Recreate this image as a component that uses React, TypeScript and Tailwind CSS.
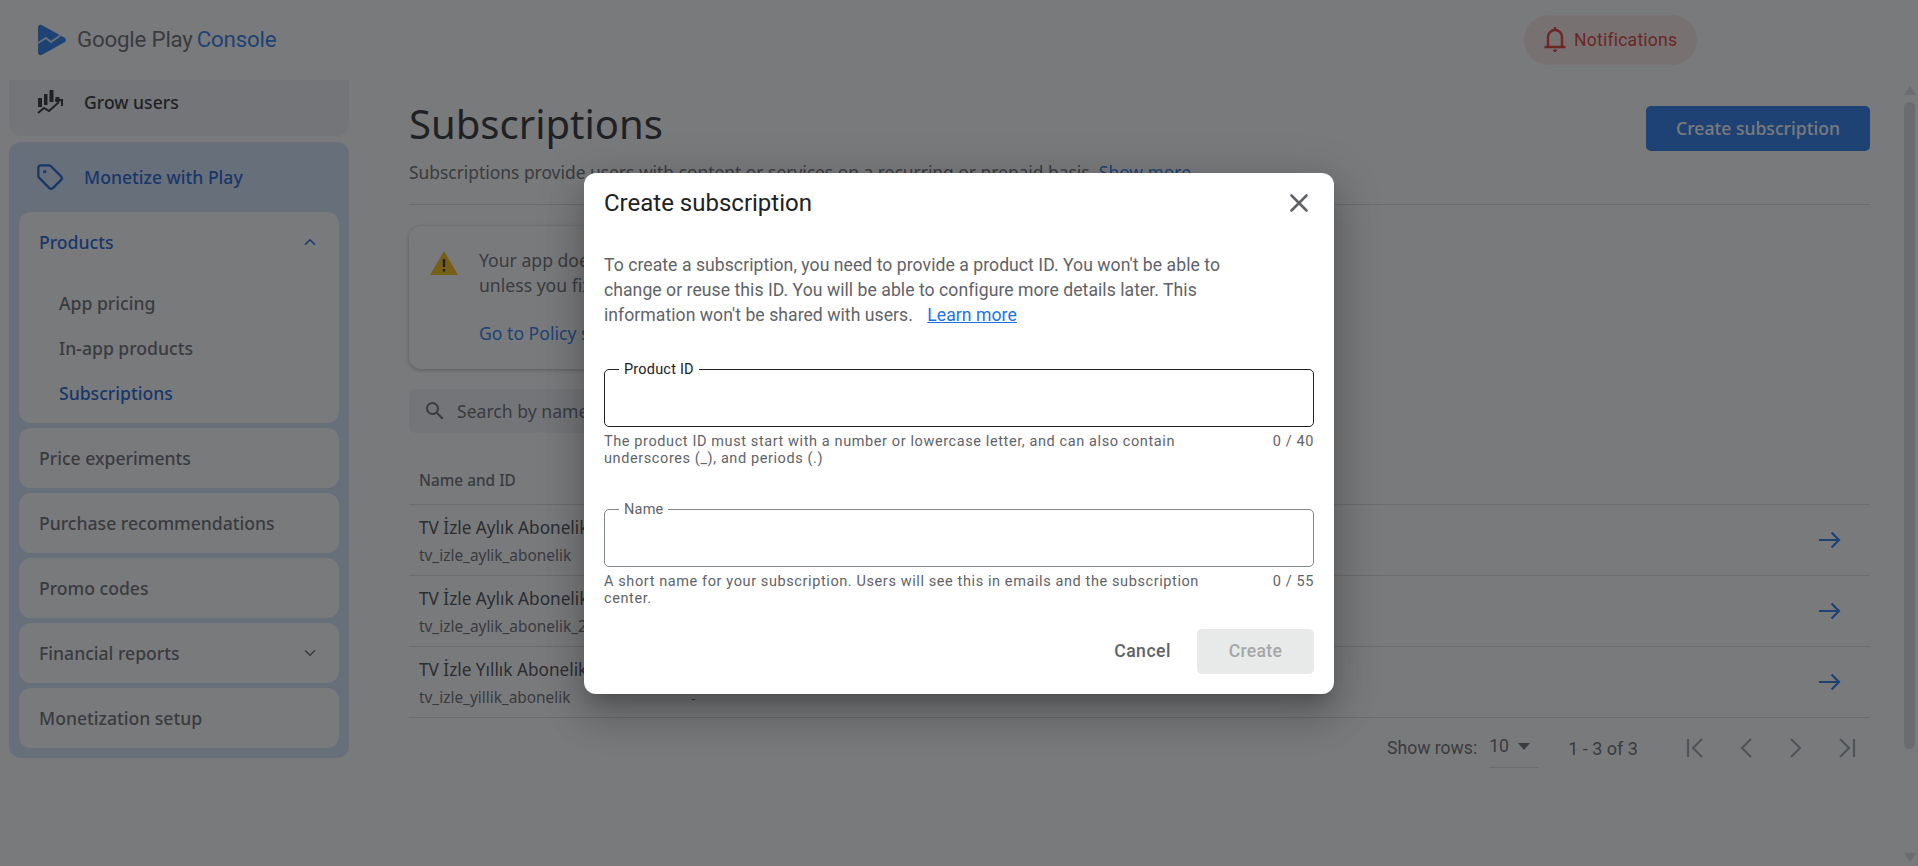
import React from 'react';
import { ChevronDown, ChevronUp, Tag, X } from 'lucide-react';

const navItems = ['Price experiments', 'Purchase recommendations', 'Promo codes', 'Financial reports', 'Monetization setup'];

const rows = [
  { name: 'TV İzle Aylık Abonelik', id: 'tv_izle_aylik_abonelik', extra: '' },
  { name: 'TV İzle Aylık Abonelik 2', id: 'tv_izle_aylik_abonelik_2', extra: '' },
  { name: 'TV İzle Yıllık Abonelik', id: 'tv_izle_yillik_abonelik', extra: '-' },
];

const Logo = () => (
  <svg width="30" height="32" viewBox="0 0 30 32" className="shrink-0">
    <path d="M1 3.5C1 1.2 3.2.2 5 1.3l22.6 12.4c1.8 1 1.8 3.600 0 4.600L5 30.700C3.200 31.800 1 30.800 1 28.500z" fill="#1a73e8" />
    <path d="M1 19l8-5 5 4 10-7" fill="none" stroke="#d2e3fc" strokeWidth="2" />
  </svg>
);

const GrowIcon = () => (
  <svg width="26" height="26" viewBox="0 0 26 26" className="shrink-0" fill="#202124">
    <rect x="1" y="9" width="4" height="9" />
    <rect x="7" y="5" width="3.500" height="11" />
    <rect x="12.500" y="1" width="4" height="12" />
    <rect x="18.500" y="8" width="4" height="5" />
    <path d="M1 24l6-5 5 3 10-9" fill="none" stroke="#202124" strokeWidth="2" />
    <path d="M18 11h7v6" fill="none" stroke="#202124" strokeWidth="2" />
  </svg>
);

const PageIcon = ({ d }: { d: string }) => (
  <svg width="24" height="24" viewBox="0 0 24 24" fill="none" stroke="#9aa0a6" strokeWidth="2.200">
    <path d={d} />
  </svg>
);

const Field = ({ label, dark, help, count }: { label: string; dark?: boolean; help: string; count: string }) => (
  <div>
    <div className={`relative h-[58px] rounded-[5px] border ${dark ? 'border-[#202124]' : 'border-[#80868b]'}`}>
      <span className={`absolute left-[14px] top-[-8px] bg-white px-[5px] text-[14.500px] leading-[16px] tracking-[0.2px] ${dark ? 'text-[#202124]' : 'text-[#5f6368]'}`}>
        {label}
      </span>
    </div>
    <div className="mt-[6px] flex justify-between text-[14.500px] leading-[17.500px] tracking-[0.6px] text-[#5f6368]">
      <p className="w-[610px]">{help}</p>
      <span>{count}</span>
    </div>
  </div>
);

const Dialog = () => (
  <div className="absolute inset-0 flex items-center justify-center bg-[#202124]/60">
    <div className="h-[521px] w-[750px] rounded-[12px] bg-white px-[20px] pt-[18px] font-['Roboto',sans-serif] shadow-[0_11px_15px_-7px_rgba(0,0,0,0.2),0_24px_38px_3px_rgba(0,0,0,0.14),0_9px_46px_8px_rgba(0,0,0,0.12)]">
      <div className="flex h-[24px] items-center justify-between">
        <h2 className="text-[24px] leading-[24px] text-[#202124]">Create subscription</h2>
        <X size={30} strokeWidth={2.100} className="text-[#5f6368]" />
      </div>
      <p className="mt-[38px] w-[665px] text-[17.600px] leading-[25px] tracking-[0.05px] text-[#5f6368]">
        To create a subscription, you need to provide a product ID. You won't be able to change or reuse this ID. You will be able to configure more details later. This information won't be shared with users.{' '}
        <span className="ml-[10px] text-[#1a73e8] underline">Learn more</span>
      </p>
      <div className="mt-[41px]">
        <Field dark label="Product ID" count="0 / 40" help="The product ID must start with a number or lowercase letter, and can also contain underscores (_), and periods (.)" />
      </div>
      <div className="mt-[41px]">
        <Field label="Name" count="0 / 55" help="A short name for your subscription. Users will see this in emails and the subscription center." />
      </div>
      <div className="mt-[21px] flex items-center justify-end gap-[26px]">
        <button className="text-[17.600px] font-medium tracking-[0.5px] text-[#5f6368]">Cancel</button>
        <button className="h-[45px] w-[117px] rounded-[5px] bg-[#e8e9e9] text-[17.600px] font-medium tracking-[0.3px] text-[#a5a7a8]">Create</button>
      </div>
    </div>
  </div>
);

export default function App() {
  return (
    <div className="relative flex h-[866px] flex-col overflow-hidden bg-white font-['Noto_Sans',sans-serif] text-[#202124]">
      <header className="flex h-[80px] shrink-0 items-center pl-[37px]">
        <Logo />
        <div className="ml-[10px] flex w-[200px] gap-[4px] whitespace-nowrap font-['Roboto',sans-serif] text-[22.300px] tracking-[-0.2px]">
          <span className="text-[#5f6368]">Google Play</span>
          <span className="text-[#1a73e8]">Console</span>
        </div>
        <div className="ml-[1247px] flex h-[50px] w-[173px] items-center rounded-full bg-[#fce8e6] pl-[19px] font-['Roboto',sans-serif] text-[17.600px] tracking-[0.2px] text-[#d93025]">
          <svg width="24" height="28" viewBox="0 0 24 28" fill="none" stroke="#d93025" strokeWidth="2.400">
            <path d="M5 21V11a7 7 0 0 1 14 0v10M1.500 21h21" />
            <path d="M12 1v3" />
            <path d="M10 24h4l-2 2z" fill="#d93025" strokeWidth="1" />
          </svg>
          <span className="ml-[7px]">Notifications</span>
        </div>
      </header>

      <div className="flex min-h-0 flex-1">
        <aside className="w-[368px] shrink-0 pl-[9px] pr-[19px]">
          <div className="flex h-[56px] items-center gap-[21px] rounded-b-[12px] bg-[#f1f3f4] pb-[12px] pl-[28px] text-[17.600px] font-medium">
            <GrowIcon />
            <span>Grow users</span>
          </div>
          <div className="mt-[6px] rounded-[12px] bg-[#d3e3fd] px-[10px] pb-[10px]">
            <div className="flex h-[70px] items-center gap-[20px] pl-[17px] text-[17.600px] font-medium text-[#0b57d0]">
              <Tag size={28} strokeWidth={2} />
              <span>Monetize with Play</span>
            </div>
            <div className="flex flex-col gap-[5px]">
              <div className="h-[211px] rounded-[12px] bg-white pl-[20px] pr-[20px] pt-[18px] text-[17.600px] font-medium">
                <div className="flex h-[24px] items-center justify-between text-[#0b57d0]">
                  <span>Products</span>
                  <ChevronUp size={18} strokeWidth={2} />
                </div>
                <div className="mt-[37px] flex flex-col gap-[21px] pl-[20px] leading-[24px] text-[#5f6368]">
                  <span>App pricing</span>
                  <span>In-app products</span>
                  <span className="text-[#0b57d0]">Subscriptions</span>
                </div>
              </div>
              {navItems.map(item => (
                <div key={item} className="flex h-[60px] items-center justify-between rounded-[12px] bg-white px-[20px] text-[17.600px] font-medium text-[#5f6368]">
                  <span>{item}</span>
                  {item === 'Financial reports' && <ChevronDown size={18} strokeWidth={2} />}
                </div>
              ))}
            </div>
          </div>
        </aside>

        <main className="min-w-0 flex-1 pl-[41px] pr-[31px]">
          <div className="flex h-[125px] items-start justify-between border-b border-[#dadce0] pt-[19px]">
            <div>
              <h1 className="text-[40px] leading-[50px]">Subscriptions</h1>
              <p className="mt-[11px] whitespace-nowrap text-[17.400px] leading-[24px] text-[#5f6368]">
                Subscriptions provide users with content or services on a recurring or prepaid basis.{' '}
                <span className="text-[#1a73e8]">Show more</span>
              </p>
            </div>
            <button className="mt-[7px] h-[45px] w-[224px] rounded-[5px] bg-[#1a73e8] text-[17.600px] font-medium text-white">Create subscription</button>
          </div>
          <div className="mr-[660px] mt-[21px] flex h-[143px] gap-[20px] rounded-[12px] bg-white pl-[20px] pt-[22px] text-[17.600px] leading-[25px] text-[#5f6368] shadow-[0_1px_4px_rgba(60,64,67,0.4)]">
            <svg width="30" height="26" viewBox="0 0 30 26" className="mt-[2px] shrink-0">
              <path d="M15 1l14 24H1z" fill="#fbbc04" />
              <path d="M13.800 9h2.400v8h-2.400zM13.800 19h2.400v2.400h-2.400z" fill="#202124" />
            </svg>
            <div className="whitespace-nowrap">
              <p>Your app doesn't comply with our policies and can't</p>
              <p>unless you fix the issues listed on the Policy status page</p>
              <p className="mt-[23px] text-[#1a73e8]">Go to Policy status</p>
            </div>
          </div>
          <div className="mr-[660px] mt-[20px] flex h-[44px] items-center gap-[10px] rounded-[6px] bg-[#f1f3f4] pl-[14px] text-[17.600px] text-[#5f6368]">
            <svg width="24" height="24" viewBox="0 0 24 24" fill="#5f6368">
              <path d="M15.500 14h-.79l-.28-.27A6.471 6.471 0 0 0 16 9.500 6.500 6.500 0 1 0 9.500 16c1.610 0 3.090-.59 4.230-1.570l.27.28v.79l5 4.990L20.490 19l-4.990-5zm-6 0C7.010 14 5 11.990 5 9.500S7.010 5 9.500 5 14 7.010 14 9.500 11.990 14 9.500 14z" />
            </svg>
            <span>Search by name or product ID</span>
          </div>
          <div className="mt-[20px] flex h-[52px] items-center border-b border-[#dadce0] pl-[10px] pt-[4px] text-[15.400px] font-medium text-[#5f6368]">Name and ID</div>
          {rows.map(row => (
            <div key={row.id} className="flex h-[71px] items-center border-b border-[#dadce0] pl-[10px] pr-[29px]">
              <div className="w-[272px] whitespace-nowrap">
                <div className="text-[17.200px] leading-[24px] text-[#3c4043]">{row.name}</div>
                <div className="mt-[7px] text-[15.400px] leading-[18px] text-[#5f6368]">{row.id}</div>
              </div>
              <div className="flex-1 self-end pb-[8px] text-[14px] text-[#5f6368]">{row.extra}</div>
              <svg width="22" height="18" viewBox="0 0 22 18" fill="none" stroke="#1a73e8" strokeWidth="2.200">
                <path d="M0 9h20M12.500 1.500L20 9l-7.500 7.500" />
              </svg>
            </div>
          ))}
          <div className="flex h-[62px] items-center pb-[2px] pl-[978px] font-['Roboto',sans-serif] text-[#5f6368]">
            <span className="text-[17.600px]">Show rows:</span>
            <div className="ml-[12px] flex h-[40px] w-[49px] shrink-0 items-center border-b border-[#dadce0] pb-[2px] text-[17.600px]">
              10
              <span className="ml-[9px] h-0 w-0 border-x-[6.500px] border-t-[7px] border-x-transparent border-t-[#5f6368]" />
            </div>
            <span className="ml-[30px] shrink-0 text-[18px]">1 - 3 of 3</span>
            <div className="ml-[46px] flex shrink-0 gap-[26px]">
              <PageIcon d="M4 3v18M18 3l-9 9 9 9" />
              <PageIcon d="M17 3l-9 9 9 9" />
              <PageIcon d="M7 3l9 9-9 9" />
              <PageIcon d="M6 3l9 9-9 9M20 3v18" />
            </div>
          </div>
        </main>

        <div className="flex w-[17px] shrink-0 flex-col items-center pt-[6px] pb-[4px]">
          <span className="h-0 w-0 border-x-[6px] border-b-[9px] border-x-transparent border-b-[#dadce0]" />
          <div className="mt-[7px] h-[647px] w-[11px] rounded-full bg-[#dadce0]" />
          <div className="flex-1" />
          <span className="h-0 w-0 border-x-[6px] border-t-[9px] border-x-transparent border-t-[#dadce0]" />
        </div>
      </div>

      <Dialog />
    </div>
  );
}
